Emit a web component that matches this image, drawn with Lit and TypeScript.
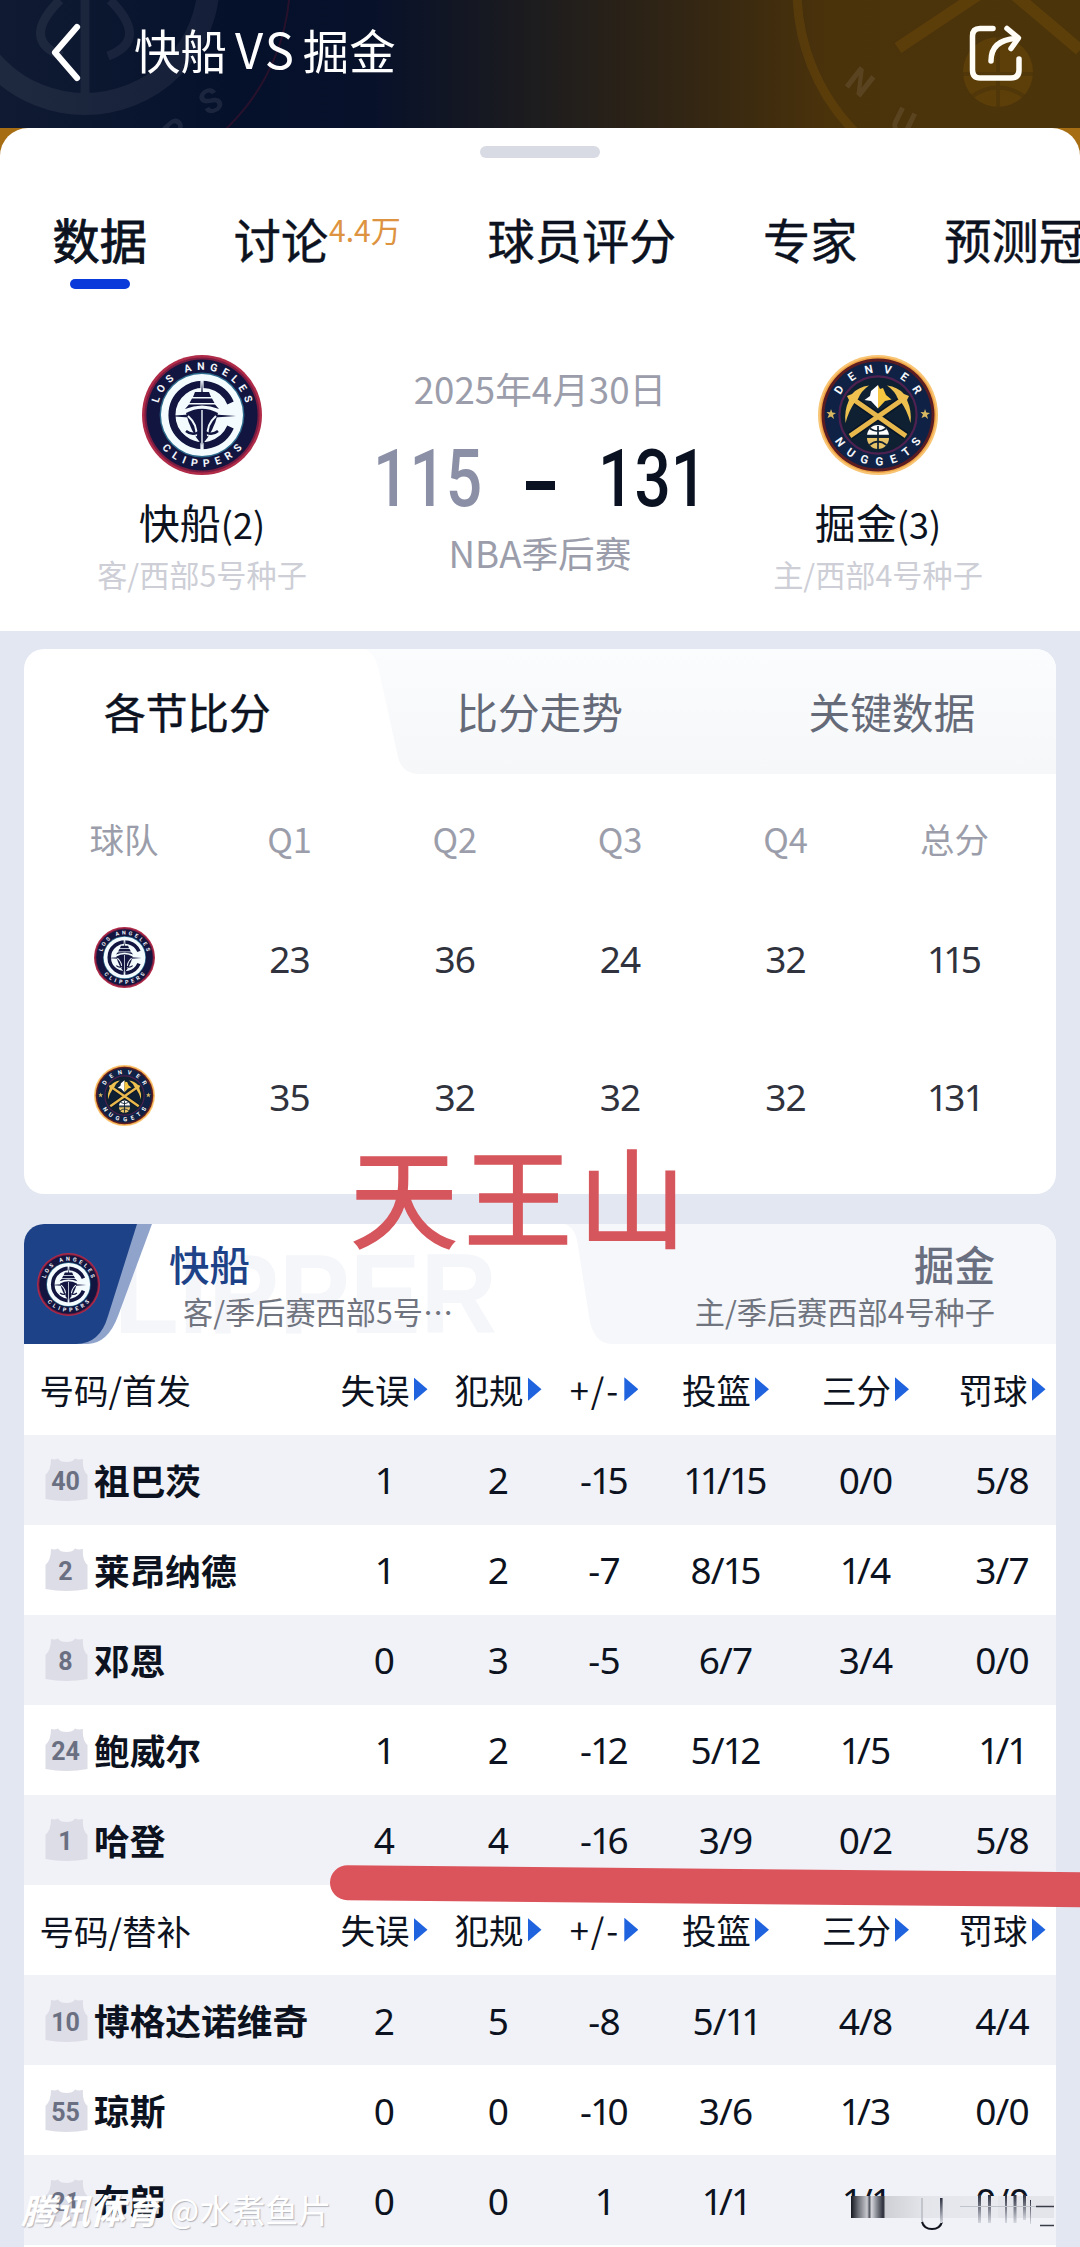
import { LitElement, html, svg, css } from 'lit';
import { customElement, property } from 'lit/decorators.js';

type TeamKey = 'clippers' | 'nuggets';

interface Player {
    no: string;
    name: string;
    stats: string[];
}

const STAT_COLUMNS = ['失误', '犯规', '+/-', '投篮', '三分', '罚球'];

const STARTERS: Player[] = [
    { no: '40', name: '祖巴茨', stats: ['1', '2', '-15', '11/15', '0/0', '5/8'] },
    { no: '2', name: '莱昂纳德', stats: ['1', '2', '-7', '8/15', '1/4', '3/7'] },
    { no: '8', name: '邓恩', stats: ['0', '3', '-5', '6/7', '3/4', '0/0'] },
    { no: '24', name: '鲍威尔', stats: ['1', '2', '-12', '5/12', '1/5', '1/1'] },
    { no: '1', name: '哈登', stats: ['4', '4', '-16', '3/9', '0/2', '5/8'] },
];

const BENCH: Player[] = [
    { no: '10', name: '博格达诺维奇', stats: ['2', '5', '-8', '5/11', '4/8', '4/4'] },
    { no: '55', name: '琼斯', stats: ['0', '0', '-10', '3/6', '1/3', '0/0'] },
    { no: '21', name: '布朗', stats: ['0', '0', '1', '1/1', '1/1', '0/0'] },
];

const QUARTERS: { team: TeamKey; scores: string[] }[] = [
    { team: 'clippers', scores: ['23', '36', '24', '32', '115'] },
    { team: 'nuggets', scores: ['35', '32', '32', '32', '131'] },
];

// The digit 1 is set tighter than the others.
const digits = (text: string) =>
    html`<span class="digits">${[...text].map((c) => (c === '1' ? html`<span class="one">1</span>` : c))}</span>`;

/**
 * Round team crest, scales to the size of its host.
 *
 * @element team-logo
 */
@customElement('team-logo')
export class TeamLogo extends LitElement {
    @property() team: TeamKey = 'clippers';

    static styles = css`
        :host {
            display: block;
        }
        svg {
            display: block;
            width: 100%;
            height: 100%;
        }
        text {
            font-family: 'Roboto', 'Liberation Sans', sans-serif;
            font-weight: 700;
            fill: #f4f6fb;
            text-anchor: middle;
        }
    `;

    private _clippers() {
        return svg`
            <path id="top" d="M14.8 60 A45.2 45.2 0 0 1 105.2 60" fill="none" />
            <path id="bottom" d="M8 60 A52 52 0 0 0 112 60" fill="none" />
            <circle cx="60" cy="60" r="60" fill="#b02b48" />
            <circle cx="60" cy="60" r="57.6" fill="#7a1c41" />
            <circle cx="60" cy="60" r="55.6" fill="#12153f" />
            <circle cx="60" cy="60" r="42.4" fill="#2c6a8c" />
            <circle cx="60" cy="60" r="41" fill="#f3fbff" />
            <text font-size="10.500"><textPath href="#top" startOffset="50%" textLength="118">LOS ANGELES</textPath></text>
            <text font-size="10.500"><textPath href="#bottom" startOffset="50%" textLength="92">CLIPPERS</textPath></text>
            <path
                d="M88.5 48 A30.5 30.5 0 1 0 88.5 72"
                fill="none"
                stroke="#12153f"
                stroke-width="7"
            />
            <rect x="58.4" y="24" width="3.2" height="13" fill="#f3fbff" />
            <rect x="58.4" y="84" width="3.2" height="12" fill="#f3fbff" />
            <path d="M60 25.5 L61 41 L59 41 Z M60 95 L61 80 L59 80 Z" fill="#12153f" />
            <path d="M26 61 L47 59.6 V62.4 Z M94 61 L73 59.6 V62.4 Z" fill="#12153f" />
            <path d="M53 37 H67 L69 42 H51 Z M50 43.5 H70 L72.5 48 H47.5 Z M47 49.5 H73 L77 54 Q60 47 43 54 Z" fill="#12153f" />
            <path d="M44 58 Q60 49.500 76 58 Q72 76 60 90 Q48 76 44 58 Z" fill="#12153f" />
            <path d="M60 55 V94" stroke="#f3fbff" stroke-width="1.4" />
            <path d="M46 61 Q56 70 54 81 M74 61 Q64 70 66 81" fill="none" stroke="#f3fbff" stroke-width="2" />
            <path d="M44 76 Q50 81 57 77 M76 76 Q70 81 63 77" fill="none" stroke="#12153f" stroke-width="2.500" />
        `;
    }

    private _nuggets() {
        return svg`
            <path id="top" d="M17.500 60 A42.500 42.500 0 0 1 102.500 60" fill="none" />
            <path id="bottom" d="M9.500 60 A50.500 50.500 0 0 0 110.500 60" fill="none" />
            <circle cx="60" cy="60" r="60" fill="#f8c574" />
            <circle cx="60" cy="60" r="58" fill="#f0a445" />
            <circle cx="60" cy="60" r="56.500" fill="#5b1c22" />
            <circle cx="60" cy="60" r="53.500" fill="#0f2144" />
            <circle cx="60" cy="60" r="38.600" fill="#0e2032" stroke="#4e2150" stroke-width="2.200" />
            <text font-size="11.500"><textPath href="#top" startOffset="50%" textLength="92">DENVER</textPath></text>
            <text font-size="11.500"><textPath href="#bottom" startOffset="50%" textLength="104">NUGGETS</textPath></text>
            <path
                d="M13 54 L14.300 57.500 L18 58 L15 60 L16 64 L13 61.600 L9.500 63 L11 59.500 L8.500 57 L12 57.300 Z"
                fill="#d9b862"
            />
            <path
                d="M107 54 L108.300 57.500 L112 58 L109 60 L110 64 L107 61.600 L103.500 63 L105 59.500 L102.500 57 L106 57.300 Z"
                fill="#d9b862"
            />
            <path d="M32 81 L86 43.500 M88 81 L34 43.500" stroke="#081526" stroke-width="8" />
            <path d="M32 81 L86 43.500 M88 81 L34 43.500" stroke="#e8b84c" stroke-width="4.800" />
            <path
                d="M51 30.500 Q40 32 34 39 L29 41 L31 45 Q26 56 27.500 68 Q31 55 37 47 L40 44 Q43 36 51 30.500 Z"
                fill="#eec050"
            />
            <path
                d="M69 30.500 Q80 32 86 39 L91 41 L89 45 Q94 56 92.500 68 Q89 55 83 47 L80 44 Q77 36 69 30.500 Z"
                fill="#eec050"
            />
            <path d="M60 30 L53 36 L52 41 L46.500 45 L53 46 L60 53.500 Z" fill="#ffffff" />
            <path d="M60 30 L62 34 L65 33 L68 40 L73.500 44.500 L67 46 L60 53.500 Z" fill="#f6c640" />
            <path d="M49 81 A11 11 0 0 1 71 81 Z" fill="#ffffff" />
            <path d="M49 83 A11 11 0 0 0 71 83 Z" fill="#e8c267" />
            <path
                d="M60 71 V94 M49 80.500 H71 M52 73.500 Q60 79 68 73.500 M51.500 90 Q60 83 68.500 90"
                fill="none"
                stroke="#0e2032"
                stroke-width="1.700"
            />
        `;
    }

    render() {
        return html`
            <svg viewBox="0 0 120 120" role="img" aria-label="${this.team}">
                ${this.team === 'clippers' ? this._clippers() : this._nuggets()}
            </svg>
        `;
    }
}

/**
 * Match detail page: header, score summary, quarters and player stats.
 *
 * @element app-root
 */
@customElement('app-root')
export class AppRoot extends LitElement {
    static styles = css`
        :host {
            display: block;
            position: relative;
            width: 1080px;
            height: 2247px;
            overflow: hidden;
            background: #e3e7f2;
            color: #0c1220;
            font-family: 'Noto Sans CJK SC', sans-serif;
            white-space: nowrap;
        }
        .top {
            position: relative;
            display: flex;
            align-items: center;
            justify-content: space-between;
            box-sizing: border-box;
            height: 128px;
            padding: 0 54px 24px 49px;
            color: #fff;
            background: linear-gradient(
                90deg,
                #101b33 0,
                #05102b 230px,
                #07112a 370px,
                #1f1d1d 550px,
                #332613 690px,
                #4a320b 826px,
                #4c340a 1080px
            );
        }
        .ghost {
            position: absolute;
            inset: 0;
        }
        .ghost text {
            font: 700 34px 'Roboto', sans-serif;
            fill: #fff;
        }
        .lead {
            position: relative;
            display: flex;
            align-items: center;
            gap: 49px;
            font-size: 46.5px;
            line-height: 60px;
        }
        .title-text {
            padding-bottom: 7px;
        }
        .versus {
            margin: 0 7px 0 8px;
            font-size: 49px;
            letter-spacing: 2px;
        }
        .lead svg,
        .share {
            display: block;
        }
        .share {
            position: relative;
        }
        .sheet-wrap {
            background: #a66d12;
        }
        .sheet {
            box-sizing: border-box;
            height: 503px;
            padding-top: 18px;
            border-radius: 28px 28px 0 0;
            background: #fff;
        }
        .handle {
            width: 120px;
            height: 12px;
            margin: 0 auto;
            border-radius: 6px;
            background: #d8dae4;
        }
        .tabs {
            display: flex;
            gap: 86.8px;
            height: 132px;
            padding-left: 52.5px;
            overflow: hidden;
            font-size: 47.2px;
            line-height: 60px;
            -webkit-text-stroke: 0.4px;
        }
        .tab {
            display: flex;
            flex: none;
            flex-direction: column;
            padding-top: 51px;
        }
        .tab.active {
            -webkit-text-stroke: 0.9px;
        }
        .tab-row {
            display: flex;
        }
        .badge {
            margin-left: 1px;
            padding-top: 1px;
            color: #dd9340;
            font-size: 30px;
            line-height: 39px;
            -webkit-text-stroke: 0;
        }
        .bar {
            align-self: center;
            width: 60px;
            height: 10px;
            margin-top: 10px;
            border-radius: 5px;
            background: #0b3adb;
        }
        .match {
            display: grid;
            grid-template-columns: 404px 272px 404px;
            padding-top: 65px;
        }
        .team {
            display: flex;
            flex-direction: column;
            align-items: center;
        }
        .big-logo {
            width: 120px;
            height: 120px;
        }
        .team-name {
            margin-top: 16px;
            font-size: 41px;
            line-height: 60px;
        }
        .wins {
            font-size: 36px;
        }
        .seed {
            margin-top: -1px;
            color: #cdced6;
            font-size: 30.2px;
            line-height: 44px;
        }
        .middle {
            display: flex;
            flex-direction: column;
            align-items: center;
            color: #9b9dab;
            font-size: 36.7px;
            line-height: 46px;
        }
        .date {
            margin-top: 10px;
        }
        .score {
            display: grid;
            grid-template-columns: 104px 1fr 104px;
            align-items: center;
            width: 324px;
            height: 88px;
            margin-top: 24px;
            font-family: 'Roboto', sans-serif;
            font-size: 80px;
            font-weight: 500;
            line-height: 88px;
        }
        .score span {
            transform: scaleX(0.8);
            transform-origin: 0 50%;
        }
        .score .away {
            margin-left: -5px;
            color: #8b90a6;
        }
        .score .home {
            color: #0a1222;
        }
        .score i {
            justify-self: center;
            width: 29px;
            height: 9px;
            margin-top: 13px;
            background: #0a1222;
        }
        .stage {
            margin-top: 6px;
        }
        .card {
            width: 1032px;
            margin: 18px auto 0;
            overflow: hidden;
            border-radius: 20px;
            background: #fff;
        }
        .quarters {
            height: 545px;
        }
        .segments {
            position: relative;
            display: flex;
            gap: 185.5px;
            height: 125px;
            padding-left: 80px;
            color: #656a78;
            font-size: 41.7px;
            line-height: 124px;
        }
        .segments svg {
            position: absolute;
            left: 0;
            top: 0;
        }
        .segment {
            position: relative;
        }
        .segment.active {
            color: #0c1220;
            -webkit-text-stroke: 0.5px;
        }
        .grid {
            display: grid;
            grid-template-columns: 166px 165px 165.5px 165px 166px 172px;
            grid-template-rows: 129px 108px 168px;
            align-items: center;
            justify-items: center;
            margin-left: 17px;
        }
        .grid .label {
            padding-bottom: 2px;
            color: #9b9eaa;
            font-size: 34.5px;
        }
        .grid .value {
            padding-top: 3px;
            color: #30333d;
        }
        .small-logo {
            width: 61px;
            height: 61px;
        }
        .digits {
            font-family: 'Noto Sans', sans-serif;
            font-size: 37px;
            letter-spacing: -0.8px;
        }
        .one {
            margin: 0 -3px 0 -1px;
        }
        .stats {
            margin-top: 30px;
            border-radius: 20px 20px 0 0;
        }
        .stats-head {
            position: relative;
            display: flex;
            justify-content: space-between;
            height: 120px;
        }
        .stats-head svg {
            position: absolute;
            left: 0;
            top: 0;
        }
        .stats-head svg text {
            font: 700 114px 'Liberation Sans', sans-serif;
            fill: #f5f6fa;
        }
        .head-team {
            position: relative;
            display: flex;
        }
        .head-logo {
            width: 63px;
            height: 63px;
            margin: 28.5px 0 0 13px;
        }
        .head-name {
            color: #1d4288;
            font-size: 40.5px;
            font-weight: 500;
            line-height: 50px;
        }
        .head-text {
            margin: 15px 0 0 69px;
        }
        .head-sub {
            margin-left: 14px;
            color: #70747f;
            font-size: 30.2px;
            line-height: 44px;
        }
        .head-text.right {
            position: relative;
            margin: 15px 61px 0 0;
            text-align: right;
        }
        .right .head-name {
            color: #6a6f80;
        }
        .right .head-sub {
            margin-left: 0;
        }
        .row {
            display: grid;
            grid-template-columns: 293px 134px 94px 118px 125px 155px 118px;
            align-items: center;
            height: 90px;
        }
        .row.head {
            height: 90.5px;
            font-size: 34.5px;
            line-height: 50px;
        }
        .row.odd {
            background: #f1f2f7;
        }
        .cell {
            display: flex;
            align-items: center;
            justify-content: center;
        }
        .row.head .cell {
            padding-bottom: 1px;
        }
        .row.head .cell:nth-child(4) {
            letter-spacing: 2px;
        }
        .row .title {
            padding-left: 15.5px;
        }
        .arrow {
            width: 14px;
            height: 24px;
            margin: 1px 0 0 4px;
            background: #1f63de;
            clip-path: polygon(0 0, 100% 50%, 0 100%);
        }
        .player {
            display: flex;
            align-items: center;
            padding-left: 21px;
            font-size: 35.7px;
            font-weight: 700;
            line-height: 50px;
        }
        .jersey {
            display: grid;
            width: 43px;
            height: 43px;
            margin-right: 6px;
        }
        .jersey svg,
        .jersey span {
            grid-area: 1 / 1;
        }
        .jersey span {
            position: relative;
            justify-self: center;
            padding: 0 2px 0 0;
            color: #6a6f82;
            font: 700 25px/48px 'Roboto', sans-serif;
        }
        .note {
            position: absolute;
            left: 350px;
            top: 1113px;
            color: #d6565d;
            font-size: 108px;
            letter-spacing: 6px;
            line-height: 160px;
            -webkit-text-stroke: 1.5px;
        }
        .stroke {
            position: absolute;
            left: 330px;
            top: 1865px;
            width: 800px;
            height: 34.5px;
            border-radius: 18px;
            background: #dc545b;
            transform: rotate(0.55deg);
            transform-origin: 0 50%;
        }
        .smear {
            position: absolute;
            left: 840px;
            top: 2186px;
        }
        .watermark {
            position: absolute;
            left: 21px;
            top: 2182px;
            display: flex;
            align-items: center;
            gap: 9px;
            color: #fff;
            font-size: 33px;
            line-height: 54px;
            text-shadow: 1px 1px 1px rgba(120, 122, 132, 0.5);
        }
        .watermark b {
            font-size: 34.5px;
            font-style: italic;
        }
    `;

    private _header() {
        return html`
            <header class="top">
                <svg class="ghost" width="1080" height="128" viewBox="0 0 1080 128" fill="none">
                    <g stroke="#fff" opacity="0.06">
                        <circle cx="85" cy="-20" r="124" stroke-width="22" />
                        <path d="M85 -20 V104 M60 0 Q20 40 62 56 M110 0 Q150 40 108 56" stroke-width="9" />
                    </g>
                    <circle cx="85" cy="-20" r="205" stroke="#5a1430" stroke-width="2" opacity="0.4" />
                    <g opacity="0.09">
                        <text x="200" y="112" transform="rotate(-30 212 100)">S</text>
                        <text x="166" y="142" transform="rotate(-42 178 130)">R</text>
                        <text x="848" y="94" transform="rotate(38 860 82)">N</text>
                        <text x="892" y="134" transform="rotate(26 904 122)">U</text>
                    </g>
                    <g stroke="#b07a08" opacity="0.17">
                        <circle cx="1000" cy="-10" r="203" stroke-width="9" />
                        <path d="M898 48 L985 -10 M1080 50 L1015 -5" stroke-width="12" />
                        <circle cx="998" cy="72" r="35" fill="#b07a08" stroke="none" />
                    </g>
                    <path
                        d="M998 37 V107 M963 74 H1033 M971 97 Q998 78 1025 97"
                        stroke="#4c340a"
                        stroke-width="4"
                        opacity="0.7"
                    />
                </svg>
                <div class="lead">
                    <svg width="36" height="60" viewBox="0 0 36 60" fill="none">
                        <path
                            d="M28 5 L6 30.500 L28 56"
                            stroke="#fff"
                            stroke-width="6.200"
                            stroke-linecap="round"
                            stroke-linejoin="round"
                        />
                    </svg>
                    <span class="title-text">快船<span class="versus">VS</span>掘金</span>
                </div>
                <svg class="share" width="60" height="60" viewBox="0 0 60 60" fill="none">
                    <g stroke="#fffdf5" stroke-width="5.500" stroke-linecap="round" stroke-linejoin="round">
                        <path d="M27 6.500 H14 Q6.500 6.500 6.500 14 V48 Q6.500 56 14 56 H45 Q53 56 53 48 V37" />
                        <path d="M25 39 Q25 18 50 16.500" />
                        <path d="M41 6.500 L52.500 16 L45 26.500" />
                    </g>
                </svg>
            </header>
        `;
    }

    private _tabs() {
        return html`
            <nav class="tabs">
                <div class="tab active">
                    <div>数据</div>
                    <div class="bar"></div>
                </div>
                <div class="tab">
                    <div class="tab-row">讨论<span class="badge">4.4万</span></div>
                </div>
                <div class="tab"><div>球员评分</div></div>
                <div class="tab"><div>专家</div></div>
                <div class="tab"><div>预测冠军</div></div>
            </nav>
        `;
    }

    private _match() {
        return html`
            <section class="match">
                <div class="team">
                    <team-logo class="big-logo" team="clippers"></team-logo>
                    <div class="team-name">快船<span class="wins">(2)</span></div>
                    <div class="seed">客/西部5号种子</div>
                </div>
                <div class="middle">
                    <div class="date">2025年4月30日</div>
                    <div class="score">
                        <span class="away">115</span>
                        <i></i>
                        <span class="home">131</span>
                    </div>
                    <div class="stage">NBA季后赛</div>
                </div>
                <div class="team">
                    <team-logo class="big-logo" team="nuggets"></team-logo>
                    <div class="team-name">掘金<span class="wins">(3)</span></div>
                    <div class="seed">主/西部4号种子</div>
                </div>
            </section>
        `;
    }

    private _quarters() {
        return html`
            <section class="card quarters">
                <div class="segments">
                    <svg width="1032" height="125" viewBox="0 0 1032 125">
                        <defs>
                            <linearGradient id="fade" x1="0" y1="0" x2="0" y2="1">
                                <stop offset="0" stop-color="#fbfcfd" />
                                <stop offset="1" stop-color="#f6f7f9" />
                            </linearGradient>
                        </defs>
                        <path
                            d="M341 0 Q351 4 355 22 L374 108 Q378 125 396 125 H1032 V0 Z"
                            fill="url(#fade)"
                        />
                    </svg>
                    <span class="segment active">各节比分</span>
                    <span class="segment">比分走势</span>
                    <span class="segment">关键数据</span>
                </div>
                <div class="grid">
                    ${['球队', 'Q1', 'Q2', 'Q3', 'Q4', '总分'].map((l) => html`<span class="label">${l}</span>`)}
                    ${QUARTERS.map(
                        (q) => html`
                            <team-logo class="small-logo" team="${q.team}"></team-logo>
                            ${q.scores.map((s) => html`<span class="value">${digits(s)}</span>`)}
                        `
                    )}
                </div>
            </section>
        `;
    }

    private _columns(title: string) {
        return html`
            <div class="row head">
                <span class="title">${title}</span>
                ${STAT_COLUMNS.map((c) => html`<span class="cell">${c}<i class="arrow"></i></span>`)}
            </div>
        `;
    }

    private _players(players: Player[]) {
        return players.map(
            (p, i) => html`
                <div class="row ${i % 2 === 0 ? 'odd' : ''}">
                    <div class="player">
                        <span class="jersey">
                            <svg width="43" height="43" viewBox="0 0 43 43">
                                <path
                                    d="M6 1 Q10 2 13 0.500 Q15 4 21.500 4 Q28 4 30 0.500 Q33 2 38 1 Q37 12 42.500 17 V41 Q21.500 45 0.500 41 V17 Q6 12 6 1 Z"
                                    fill="#dcdde6"
                                />
                            </svg>
                            <span>${p.no}</span>
                        </span>
                        ${p.name}
                    </div>
                    ${p.stats.map((s) => html`<span class="cell">${digits(s)}</span>`)}
                </div>
            `
        );
    }

    private _stats() {
        return html`
            <section class="card stats">
                <div class="stats-head">
                    <svg width="1032" height="120" viewBox="0 0 1032 120">
                        <text x="90" y="109" textLength="383" lengthAdjust="spacingAndGlyphs">LIPPER</text>
                        <path d="M541 0 Q552 4 554 22 L565 92 Q569 120 588 120 H1032 V0 Z" fill="#f5f7fa" />
                        <path d="M100 0 H128 L94 92 Q84 119 64 120 H50 Z" fill="#8fa3cb" />
                        <path d="M0 0 H113 L84 92 Q76 120 52 120 H0 Z" fill="#1d4288" />
                    </svg>
                    <div class="head-team">
                        <team-logo class="head-logo" team="clippers"></team-logo>
                        <div class="head-text">
                            <div class="head-name">快船</div>
                            <div class="head-sub">客/季后赛西部5号…</div>
                        </div>
                    </div>
                    <div class="head-text right">
                        <div class="head-name">掘金</div>
                        <div class="head-sub">主/季后赛西部4号种子</div>
                    </div>
                </div>
                ${this._columns('号码/首发')} ${this._players(STARTERS)} ${this._columns('号码/替补')}
                ${this._players(BENCH)}
                <div class="row"></div>
            </section>
        `;
    }

    private _smear() {
        return html`
            <svg class="smear" width="216" height="48" viewBox="0 0 216 48" fill="none">
                <defs>
                    <linearGradient id="haze" x1="0" y1="0" x2="1" y2="0">
                        <stop offset="0" stop-color="#14171f" />
                        <stop offset="0.05" stop-color="#6e7079" />
                        <stop offset="0.11" stop-color="#c9cad0" />
                        <stop offset="0.125" stop-color="#555862" />
                        <stop offset="0.14" stop-color="#d5d6dc" />
                        <stop offset="0.18" stop-color="#7c7e88" />
                        <stop offset="0.22" stop-color="#292c36" />
                        <stop offset="0.235" stop-color="#cfd0d6" />
                        <stop offset="0.5" stop-color="#e4e5ea" />
                        <stop offset="1" stop-color="#e9eaef" />
                    </linearGradient>
                    <linearGradient id="drop" x1="0" y1="0" x2="0" y2="1">
                        <stop offset="0" stop-color="#2c3040" />
                        <stop offset="1" stop-color="#d6d8e0" />
                    </linearGradient>
                </defs>
                <rect x="11" y="10" width="205" height="30" fill="#f1f2f7" />
                <rect x="11" y="10" width="147" height="22" fill="url(#haze)" />
                <rect x="158" y="10" width="56" height="22" fill="#e4e5eb" />
                <path d="M82 12 V34 Q84 43 92 43 Q100 43 102 34 V12" stroke="#b9bbc4" stroke-width="1.500" />
                <path d="M82 36 Q84 43 92 43 Q100 43 102 36" stroke="#10131c" stroke-width="2" />
                <rect x="100" y="12" width="2.500" height="25" fill="url(#drop)" />
                <g fill="url(#drop)">
                    <rect x="138" y="9" width="3" height="28" />
                    <rect x="148" y="9" width="3" height="28" />
                    <rect x="165" y="9" width="2" height="28" />
                    <rect x="173.500" y="9" width="3" height="28" />
                    <rect x="183" y="9" width="3" height="25" />
                    <rect x="190" y="14" width="1" height="24" />
                </g>
                <path d="M120 20.500 H200" stroke="#c2c4cc" stroke-width="1" />
                <path d="M196 20.500 H214 M200 39.500 H214" stroke="#3a3d48" stroke-width="1.500" />
            </svg>
        `;
    }

    render() {
        return html`
            ${this._header()}
            <div class="sheet-wrap">
                <div class="sheet">
                    <div class="handle"></div>
                    ${this._tabs()} ${this._match()}
                </div>
            </div>
            ${this._quarters()} ${this._stats()}
            <div class="note">天王山</div>
            <div class="stroke"></div>
            ${this._smear()}
            <div class="watermark"><b>腾讯体育</b><span>@水煮鱼片</span></div>
        `;
    }
}
